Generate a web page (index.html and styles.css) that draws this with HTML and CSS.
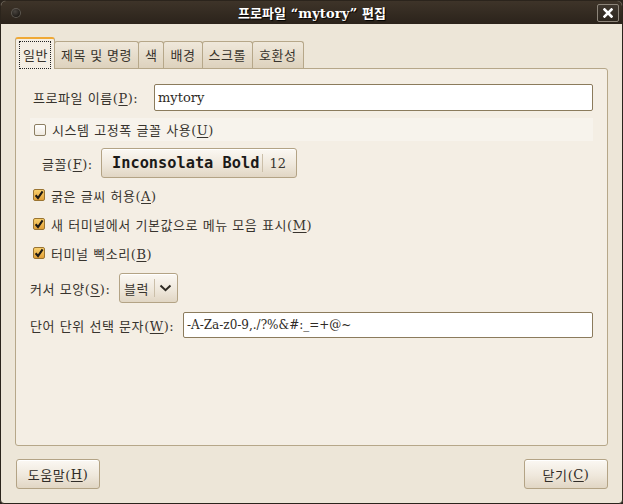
FILE: index.html
```html
<!DOCTYPE html>
<html lang="ko">
<head>
<meta charset="utf-8">
<title>프로파일 편집</title>
<link rel="stylesheet" href="styles.css">
</head>
<body>
<div class="window">
  <div class="titlebar">
    <span class="wm-dot"></span>
    <span class="title">프로파일 “mytory” 편집</span>
    <span class="wm-close">
      <svg width="10" height="10" viewBox="0 0 10 10"><path d="M1.5 1.5 L8.5 8.5 M8.5 1.5 L1.5 8.5" stroke="#fff" stroke-width="2.6" stroke-linecap="square"/></svg>
    </span>
  </div>
  <div class="content">
    <div class="tabs">
      <div class="tab active"><span class="focus">일반</span></div>
      <div class="tab">제목 및 명령</div>
      <div class="tab">색</div>
      <div class="tab">배경</div>
      <div class="tab">스크롤</div>
      <div class="tab">호환성</div>
    </div>
    <div class="panel">
      <div class="row name-row">
        <span class="lbl name-lbl">프로파일 이름(<u>P</u>):</span>
        <div class="entry name-entry">mytory</div>
      </div>
      <div class="row check-row prelight">
        <span class="cb"></span>
        <span>시스템 고정폭 글꼴 사용(<u>U</u>)</span>
      </div>
      <div class="row font-row">
        <span class="lbl font-lbl">글꼴(<u>F</u>):</span>
        <div class="btn font-btn">
          <span class="font-name">Inconsolata Bold</span>
          <span class="vsep"></span>
          <span class="font-size">12</span>
        </div>
      </div>
      <div class="row check-row c1">
        <span class="cb checked"><svg width="10" height="10" viewBox="0 0 10 10"><path d="M1.6 5.2 L4 8 L8.6 1.4" fill="none" stroke="#1e1a14" stroke-width="2.1"/></svg></span>
        <span>굵은 글씨 허용(<u>A</u>)</span>
      </div>
      <div class="row check-row c2">
        <span class="cb checked"><svg width="10" height="10" viewBox="0 0 10 10"><path d="M1.6 5.2 L4 8 L8.6 1.4" fill="none" stroke="#1e1a14" stroke-width="2.1"/></svg></span>
        <span>새 터미널에서 기본값으로 메뉴 모음 표시(<u>M</u>)</span>
      </div>
      <div class="row check-row c2">
        <span class="cb checked"><svg width="10" height="10" viewBox="0 0 10 10"><path d="M1.6 5.2 L4 8 L8.6 1.4" fill="none" stroke="#1e1a14" stroke-width="2.1"/></svg></span>
        <span>터미널 삑소리(<u>B</u>)</span>
      </div>
      <div class="row combo-row">
        <span class="lbl cursor-lbl">커서 모양(<u>S</u>):</span>
        <div class="btn combo">
          <span class="combo-text">블럭</span>
          <span class="vsep"></span>
          <svg class="chev" width="13" height="8" viewBox="0 0 13 8"><path d="M1.5 1.5 L6.5 6.2 L11.5 1.5" fill="none" stroke="#2e2a24" stroke-width="2"/></svg>
        </div>
      </div>
      <div class="row word-row">
        <span class="lbl word-lbl">단어 단위 선택 문자(<u>W</u>):</span>
        <div class="entry word-entry">-A-Za-z0-9,./?%&amp;#:_=+@~</div>
      </div>
    </div>
    <div class="actions">
      <div class="btn action">도움말(<u>H</u>)</div>
      <div class="btn action">닫기(<u>C</u>)</div>
    </div>
  </div>
</div>
<svg class="pointer" width="14" height="22" viewBox="0 0 14 22"><path d="M1 1 L1 17 L4.6 13.6 L7.4 20 L10 18.8 L7.3 12.6 L12.2 12.6 Z" fill="#111" stroke="#fff" stroke-width="1" stroke-linejoin="round"/></svg>
</body>
</html>
```

FILE: styles.css
```css
html, body {
  margin: 0;
  padding: 0;
}
body {
  width: 623px;
  height: 504px;
  background: #2a231c;
  font-family: "DejaVu Serif", "Noto Sans CJK KR", serif;
  font-size: 13px;
  letter-spacing: 0.55px;
  color: #38342e;
  position: relative;
  overflow: hidden;
}
u { text-decoration: underline; text-underline-offset: 2px; }

.window {
  box-sizing: border-box;
  width: 623px;
  height: 504px;
  border: 1px solid #2b241c;
  border-radius: 6px 6px 4px 4px;
  background: #ede6d8;
  display: flex;
  flex-direction: column;
  overflow: hidden;
}

.titlebar {
  height: 23px;
  flex: none;
  background: linear-gradient(#3e3429, #2b231b);
  display: flex;
  align-items: center;
  position: relative;
}
.wm-dot {
  width: 10px;
  height: 10px;
  border-radius: 50%;
  margin-left: 10px;
  background: radial-gradient(circle at 40% 35%, #4a4540, #1a1612 70%);
  box-shadow: inset 0 0 0 1px #5e5850;
}
.title {
  flex: 1;
  text-align: center;
  color: #fff;
  font-weight: bold;
  font-size: 13px;
  letter-spacing: 0.1px;
  text-shadow: 1px 1px 1px #000;
  margin-left: 6px;
}
.wm-close {
  width: 20px;
  height: 16px;
  margin-right: 3px;
  border: 1px solid #8d857a;
  border-radius: 2px;
  background: linear-gradient(#3f372e, #2e271f);
  display: flex;
  align-items: center;
  justify-content: center;
}

.content {
  flex: 1;
  display: flex;
  flex-direction: column;
  padding: 13px 14px 0 14px;
}

.tabs {
  height: 32px;
  display: flex;
  align-items: flex-end;
  flex: none;
}
.tab {
  box-sizing: border-box;
  height: 28px;
  padding: 0 6px 2px 6px;
  margin-right: -1px;
  border: 1px solid #b6a789;
  border-bottom: none;
  border-radius: 3px 3px 0 0;
  background: linear-gradient(#efe8db, #ddd1bc);
  display: flex;
  align-items: center;
  font-family: "Noto Sans CJK KR", sans-serif;
  font-size: 13px;
  color: #38332c;
  white-space: nowrap;
}
.tab.active {
  height: 32px;
  padding: 2px 4px 0 4px;
  background: #f4eee4;
  border-top: 2px solid #f0a935;
  position: relative;
  z-index: 2;
}
.focus {
  outline: 1px dotted #222;
  outline-offset: 0;
  padding: 3px 2px 4px 3px;
}

.panel {
  box-sizing: border-box;
  height: 378px;
  margin-top: -1px;
  flex: none;
  border: 1px solid #b6a789;
  border-radius: 0 3px 3px 3px;
  background: #f4eee4;
  position: relative;
  z-index: 1;
  padding: 15px 14px 0 17px;
  display: flex;
  flex-direction: column;
}

.row {
  display: flex;
  align-items: center;
  flex: none;
}
.lbl { white-space: nowrap; }

.entry {
  box-sizing: border-box;
  background: #fff;
  border: 1px solid #8b7b5c;
  border-radius: 2px;
  display: flex;
  align-items: center;
  padding-left: 3px;
  font-size: 13px;
  letter-spacing: 0;
  color: #2e2a25;
}

.name-row { height: 27px; }
.name-lbl { width: 121px; }
.name-entry { flex: 1; height: 27px; }

.check-row { height: 20px; }
.check-row span + span { margin-left: 6px; }
.prelight {
  height: 23px;
  margin-top: 7px;
  margin-left: -3px;
  padding-left: 4px;
  background: #f7f3ec;
}
.c1 { margin-top: 7px; }
.c2 { margin-top: 9px; }

.cb {
  box-sizing: border-box;
  width: 12px;
  height: 12px;
  border: 1px solid #8c7e62;
  border-radius: 2px;
  background: linear-gradient(#ffffff, #efe9df);
  display: flex;
  align-items: center;
  justify-content: center;
}
.cb.checked {
  border-color: #9a7431;
  background: linear-gradient(#f8cf6c, #e2a038);
}

.btn {
  box-sizing: border-box;
  border: 1px solid #b3a385;
  border-radius: 3px;
  background: linear-gradient(#fbf8f3, #efe8dc 55%, #e1d6c4);
  box-shadow: inset 0 1px 0 #fff;
  display: flex;
  align-items: center;
}
.vsep {
  width: 1px;
  align-self: stretch;
  margin: 5px 0;
  background: #cbbfa9;
}

.font-row { height: 30px; margin-top: 7px; }
.font-lbl { margin-left: 9px; width: 59px; }
.font-btn {
  width: 196px;
  height: 30px;
  padding: 0 10px 0 10px;
}
.font-name {
  font-family: "DejaVu Sans Mono", monospace;
  font-weight: bold;
  font-size: 15.3px;
  letter-spacing: 0;
  color: #1b1a18;
  width: 155px;
  white-space: nowrap;
}
.font-btn .vsep { margin-right: 6px; }
.font-size { font-size: 13px; letter-spacing: 0; color: #3a3630; }

.combo-row { height: 30px; margin-top: 10px; }
.cursor-lbl { margin-left: -3px; width: 89px; }
.combo {
  width: 59px;
  height: 30px;
  padding-left: 4px;
}
.combo-text {
  font-family: "Noto Sans CJK KR", sans-serif;
  font-size: 13px;
  width: 30px;
}
.chev { margin-left: 4px; }

.word-row { height: 26px; margin-top: 9px; }
.word-lbl { margin-left: -3px; width: 153px; }
.word-entry { flex: 1; height: 26px; font-size: 12px; }

.actions {
  display: flex;
  justify-content: space-between;
  margin-top: 13px;
  padding-left: 1px;
}
.action {
  width: 84px;
  height: 30px;
  justify-content: center;
  color: #302c27;
}

.pointer {
  position: absolute;
  left: 150px;
  top: 124px;
}
```
